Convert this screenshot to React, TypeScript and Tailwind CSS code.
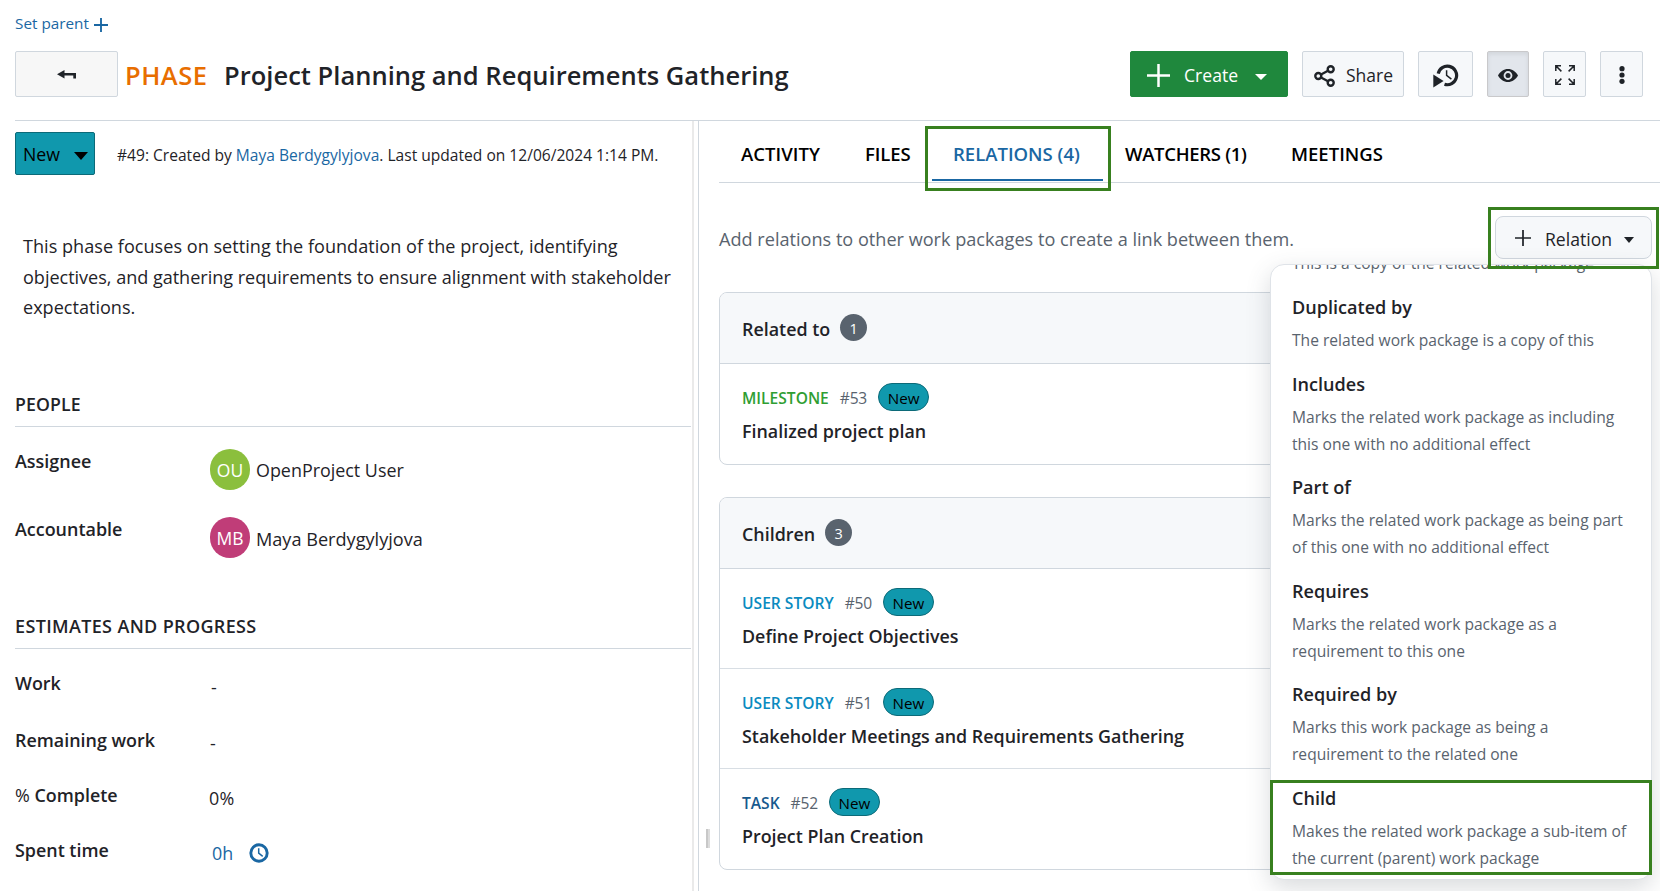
import React from "react";

const relationTypes = [
  { name: "Duplicated by", lines: ["The related work package is a copy of this"] },
  { name: "Includes", lines: ["Marks the related work package as including", "this one with no additional effect"] },
  { name: "Part of", lines: ["Marks the related work package as being part", "of this one with no additional effect"] },
  { name: "Requires", lines: ["Marks the related work package as a", "requirement to this one"] },
  { name: "Required by", lines: ["Marks this work package as being a", "requirement to the related one"] },
  { name: "Child", lines: ["Makes the related work package a sub-item of", "the current (parent) work package"] },
];

function Caret({ className }: { className: string }) {
  return (
    <svg className={className} viewBox="0 0 12 6" preserveAspectRatio="none" fill="currentColor">
      <path d="M0 0h12L6 6z" />
    </svg>
  );
}

function Plus({ className, weight }: { className: string; weight: number }) {
  return (
    <svg className={className} viewBox="0 0 24 24" fill="none" stroke="currentColor" strokeWidth={weight}>
      <path d="M12 0v24M0 12h24" />
    </svg>
  );
}

function ToolButton({ className, children }: { className: string; children: React.ReactNode }) {
  return (
    <button className={`flex h-[46px] items-center rounded-[2px] border ${className}`}>{children}</button>
  );
}

function Header() {
  return (
    <header className="h-[120px] shrink-0 pl-[15px] pr-[17px]">
      <div className="flex h-[51px] items-center pb-1 text-[15.3px] text-[#1a67a3]">
        <span className="w-[79px] whitespace-nowrap">Set parent</span>
        <Plus className="mt-[3px] h-[14px] w-[14px]" weight={3.2} />
      </div>
      <div className="flex h-[46px] items-center">
        <ToolButton className="w-[103px] border-[#d0d7de] bg-[#f7f7f7] pl-[41px]">
          <svg className="h-[9px] w-[19px]" viewBox="0 0 19 9" fill="#1f2328">
            <path d="M0 4.200 7.500 0v3H19v5.500h-2.700V5.400H7.500v3.200z" />
          </svg>
        </ToolButton>
        <h1 className="flex pt-[3px] text-[25.5px] font-semibold whitespace-nowrap text-[#1f2328]">
          <span className="ml-[7px] w-[99px] tracking-[0.5px] text-[#e86e00]">PHASE</span>
          <span className="tracking-[0.020px]">Project Planning and Requirements Gathering</span>
        </h1>
        <div className="ml-auto flex">
          <ToolButton className="w-[158px] border-[#1f883d] bg-[#1f883d] pl-4 text-white">
            <Plus className="mt-[2px] h-[23px] w-[23px]" weight={2.600} />
            <span className="ml-[14px] w-[71px] pt-[3px] text-left text-[17.600px]">Create</span>
            <Caret className="mt-[5px] h-[6px] w-[12px]" />
          </ToolButton>
          <ToolButton className="ml-[14px] w-[102px] border-[#d0d7de] bg-[#f6f8fa] pl-[11px] text-[#1f2328]">
            <svg className="mt-[3px] h-[22px] w-[21px]" viewBox="0 0 21 22" fill="none" stroke="currentColor" strokeWidth="2.400">
              <circle cx="4.300" cy="11" r="3" />
              <circle cx="16.700" cy="4.300" r="3" />
              <circle cx="16.700" cy="17.700" r="3" />
              <path d="M7 9.500 14 5.800M7 12.500l7 3.700" />
            </svg>
            <span className="ml-[11px] pt-[3px] text-[17.500px]">Share</span>
          </ToolButton>
          <ToolButton className="ml-[14px] w-[55px] border-[#d0d7de] bg-[#f6f8fa] pl-[14px]">
            <svg className="mt-[3px] h-[24px] w-[26px]" viewBox="0 0 26 24" fill="none" stroke="#1f2328">
              <path d="M5.200 9.600A9.300 9.300 0 1 1 11.500 20.300" strokeWidth="3.200" />
              <path d="M13.600 6.200v5.200l4.800 3.800" strokeWidth="1.500" />
              <path d="M0.300 10.500v13l10.300-6.500z" fill="#1f2328" stroke="none" />
            </svg>
          </ToolButton>
          <ToolButton className="ml-[14px] w-[42px] justify-center border-[#c9c9cb] bg-[#e2e6ec] shadow-[inset_0_2px_4px_rgba(0,0,0,0.08)]">
            <svg className="mt-[2px] h-[13px] w-[20px]" viewBox="0 0 20 13">
              <path
                fill="#1f2328"
                fillRule="evenodd"
                d="M0 6.500C2.300 2.600 5.800 0 10 0s7.700 2.600 10 6.500C17.700 10.400 14.200 13 10 13S2.300 10.400 0 6.500zM10 2.100a4.400 4.400 0 1 0 0 8.800 4.400 4.400 0 0 0 0-8.800z"
              />
              <circle cx="10" cy="6.500" r="2.500" fill="#1f2328" />
            </svg>
          </ToolButton>
          <ToolButton className="ml-[14px] w-[43px] justify-center border-[#d0d7de] bg-[#f6f8fa]">
            <svg className="mt-[2px] h-[20px] w-[20px]" viewBox="0 0 20 20" fill="none" stroke="#1f2328" strokeWidth="1.500">
              <path d="M.8 6V.8H6M.8.8l5.600 5.600M14 .8h5.200V6M19.200.8l-5.600 5.600M.8 14v5.200H6M.8 19.200l5.600-5.600M14 19.200h5.200V14M19.200 19.200l-5.600-5.600" />
            </svg>
          </ToolButton>
          <ToolButton className="ml-[14px] w-[43px] justify-center border-[#d0d7de] bg-[#f6f8fa]">
            <svg className="mt-[2px] h-[18px] w-[6px]" viewBox="0 0 6 18" fill="#1f2328">
              <circle cx="3" cy="2.700" r="2.600" />
              <circle cx="3" cy="9" r="2.600" />
              <circle cx="3" cy="15.300" r="2.600" />
            </svg>
          </ToolButton>
        </div>
      </div>
    </header>
  );
}

function SectionTitle({ className, children }: { className: string; children: React.ReactNode }) {
  return (
    <h2 className={`h-[37px] border-b border-[#d0d7de] leading-7 font-semibold ${className}`}>{children}</h2>
  );
}

function Person({ label, initials, name, avatar, nameClass }: { label: string; initials: string; name: string; avatar: string; nameClass: string }) {
  return (
    <div className="flex h-[41px]">
      <div className="w-[195px] text-[17.950px] leading-6 font-semibold">{label}</div>
      <div className={`flex h-[41px] w-[40px] items-center justify-center rounded-full pt-px text-[17.500px] text-white ${avatar}`}>{initials}</div>
      <div className={`ml-[6px] leading-[41px] ${nameClass}`}>{name}</div>
    </div>
  );
}

function Details() {
  return (
    <section className="w-[694px] shrink-0 border-r-2 border-[#eaeaea] pt-[11px] pr-px pl-[15px] text-[#1f2328]">
      <div className="flex h-[43px] items-center">
        <button className="flex h-[43px] w-[80px] items-center rounded-[2px] border border-[#0c6a78] bg-[#1098ad] pl-[7px] text-[17.700px] text-black">
          <span className="w-[51px] pt-[2px] text-left">New</span>
          <Caret className="mt-[5px] h-[8px] w-[14px]" />
        </button>
        <p className="ml-[22px] pt-[5px] text-[15.580px] whitespace-nowrap">
          #49: Created by <span className="text-[#1a67a3]">Maya Berdygylyjova</span>. Last updated on 12/06/2024 1:14 PM.
        </p>
      </div>
      <p className="mt-[56px] ml-[8px] text-[18.080px] leading-[30.500px] whitespace-nowrap">
        <span className="tracking-[0.020px]">This phase focuses on setting the foundation of the project, identifying</span>
        <br />
        <span className="tracking-[-0.030px]">objectives, and gathering requirements to ensure alignment with stakeholder</span>
        <br />
        expectations.
      </p>
      <SectionTitle className="mt-[67.500px] text-[17.700px] tracking-[0.100px]">PEOPLE</SectionTitle>
      <div className="mt-[22px] flex flex-col gap-[27px]">
        <Person label="Assignee" initials="OU" name="OpenProject User" avatar="bg-[#8bbf3d]" nameClass="pt-px text-[17.900px]" />
        <Person label="Accountable" initials="MB" name="Maya Berdygylyjova" avatar="bg-[#c03d78]" nameClass="pt-[2px] text-[18.140px]" />
      </div>
      <SectionTitle className="mt-[54px] text-[18px] tracking-[0.35px]">ESTIMATES AND PROGRESS</SectionTitle>
      <div className="mt-[22px] grid grid-cols-[195px_1fr] grid-rows-[57px_55px_55px_40px] text-[17.900px] leading-6">
        <div className="font-semibold">Work</div>
        <div className="pt-1 pl-px">-</div>
        <div className="font-semibold">Remaining work</div>
        <div className="pt-[3px]">-</div>
        <div className="font-semibold">
          <span className="font-normal">%</span> Complete
        </div>
        <div className="-ml-px pt-[3px] tracking-[0.200px]">0%</div>
        <div className="font-semibold">Spent time</div>
        <div className="flex pt-[3px] pl-[2px] text-[#1a67a3]">
          <span className="w-[37px]">0h</span>
          <svg className="mt-[2px] h-[20px] w-[20px]" viewBox="0 0 20 20" fill="none" stroke="currentColor">
            <circle cx="10" cy="10" r="8.200" strokeWidth="2.900" />
            <path d="M9.700 5.200v5l4 3.200" strokeWidth="1.500" />
          </svg>
        </div>
      </div>
    </section>
  );
}

const tabClass = "font-semibold leading-6";

function Tabs() {
  return (
    <nav className="grid h-[62px] grid-cols-[123px_89px_171px_166px_1fr] border-b border-[#d0d7de] pt-[21px] pl-[22px] text-[18.500px] whitespace-nowrap">
      <div className={`${tabClass} tracking-[0.050px]`}>ACTIVITY</div>
      <div className={`${tabClass} pl-px tracking-[-0.1px]`}>FILES</div>
      <div className={`${tabClass} relative text-[#1a67a3]`}>
        RELATIONS (4)
        <div className="absolute top-[37px] -left-[21px] h-[2px] w-[171px] bg-[#1a67a3]" />
        <div className="absolute -top-[16px] -left-[28px] h-[65px] w-[186px] border-3 border-[#38801f]" />
      </div>
      <div className={`${tabClass} pl-px tracking-[-0.3px]`}>WATCHERS (1)</div>
      <div className={`${tabClass} pl-px`}>MEETINGS</div>
    </nav>
  );
}

function RelationMenu() {
  return (
    <div className="absolute top-[48px] right-0 z-10 w-[382px]">
      <div className="flex h-[616px] flex-col gap-[17.600px] overflow-hidden rounded-[14px] border border-[#dfe3e8] bg-white pl-[21px] shadow-[0_8px_24px_rgba(66,74,83,0.2)]">
        <div className="-mt-[14.700px] text-[15.600px] leading-[27px] whitespace-nowrap text-[#59636e]">
          This is a copy of the related work package
        </div>
        {relationTypes.map((r) => (
          <div key={r.name} className="shrink-0 whitespace-nowrap">
            <div className="text-[18.080px] leading-6 font-semibold text-[#1f2328]">{r.name}</div>
            <div className="mt-2 text-[15.600px] leading-[27px] text-[#59636e]">
              {r.lines.map((l) => (
                <div key={l}>{l}</div>
              ))}
            </div>
          </div>
        ))}
      </div>
      <div className="absolute top-[516px] left-0 h-[95px] w-[382px] border-3 border-[#38801f]" />
    </div>
  );
}

function Card({ title, count, className, children }: { title: string; count: number; className: string; children: React.ReactNode }) {
  return (
    <div className={`w-[933px] overflow-hidden rounded-[8px] border border-[#d0d7de] ${className}`}>
      <div className="flex h-[71px] items-center border-b border-[#d0d7de] bg-[#f6f8fa] pl-[22px]">
        <span className="pt-[3px] text-[17.900px] font-semibold text-[#1f2328]">{title}</span>
        <span className="mb-px ml-[10px] flex h-[27px] w-[27px] items-center justify-center rounded-full bg-[#59636e] pt-[3px] text-[14.500px] text-white">
          {count}
        </span>
      </div>
      {children}
    </div>
  );
}

function Item({ type, color, id, title, height }: { type: string; color: string; id: string; title: string; height: string }) {
  return (
    <div className={`border-[#d8dee4] pt-[19px] pl-[22px] ${height}`}>
      <div className="flex h-[28px] items-center text-[15.580px]">
        <span className={`pt-[4px] font-semibold ${color}`}>{type}</span>
        <span className="ml-[11px] pt-[4px] tracking-[-0.200px] text-[#59636e]">{id}</span>
        <span className="ml-[11px] flex h-[28px] w-[51px] items-center justify-center rounded-full border border-[#0c6a78] bg-[#1098ad] pt-[3px] text-[15.200px] text-black">
          New
        </span>
      </div>
      <div className="mt-[6px] text-[17.860px] leading-7 font-semibold text-[#1f2328]">{title}</div>
    </div>
  );
}

function Relations() {
  return (
    <section className="flex-1 pl-[20px]">
      <Tabs />
      <div className="mt-[33px] flex h-[43px] justify-between pr-[8px]">
        <p className="text-[18.120px] leading-[46px] whitespace-nowrap text-[#59636e]">
          Add relations to other work packages to create a link between them.
        </p>
        <div className="relative">
          <button className="flex h-[43px] w-[157px] items-center rounded-[8px] border border-[#d0d7de] bg-[#f6f8fa] pl-[19px] text-[#1f2328]">
            <Plus className="h-[16px] w-[16px]" weight={2.600} />
            <span className="ml-[14px] w-[79px] pt-[4px] text-left text-[17.600px]">Relation</span>
            <Caret className="mt-[4px] h-[6px] w-[10px]" />
          </button>
          <RelationMenu />
          <div className="absolute -top-[9px] -left-[7px] z-20 h-[62px] w-[171px] border-3 border-[#38801f]" />
        </div>
      </div>
      <Card title="Related to" count={1} className="mt-[33px]">
        <Item type="MILESTONE" color="text-[#2f9e33]" id="#53" title="Finalized project plan" height="h-[100px]" />
      </Card>
      <Card title="Children" count={3} className="mt-[32px]">
        <Item type="USER STORY" color="text-[#0a8bc0]" id="#50" title="Define Project Objectives" height="h-[100px] border-b" />
        <Item type="USER STORY" color="text-[#0a8bc0]" id="#51" title="Stakeholder Meetings and Requirements Gathering" height="h-[100px] border-b" />
        <Item type="TASK" color="text-[#175a8e]" id="#52" title="Project Plan Creation" height="h-[100px]" />
      </Card>
    </section>
  );
}

export default function App() {
  return (
    <div className="flex h-[891px] w-[1660px] flex-col overflow-hidden bg-white font-['Open_Sans','Noto_Sans',sans-serif]">
      <Header />
      <div className="ml-[15px] h-px shrink-0 bg-[#d0d7de]" />
      <div className="flex min-h-0 flex-1">
        <Details />
        <div className="relative ml-[4px] w-px shrink-0 bg-[#d0d7de]">
          <div className="absolute top-[708px] left-[8px] h-[19px] w-[4px] border-x-2 border-r-[#dcdcdc] border-l-[#c8c8c8]" />
        </div>
        <Relations />
      </div>
    </div>
  );
}
